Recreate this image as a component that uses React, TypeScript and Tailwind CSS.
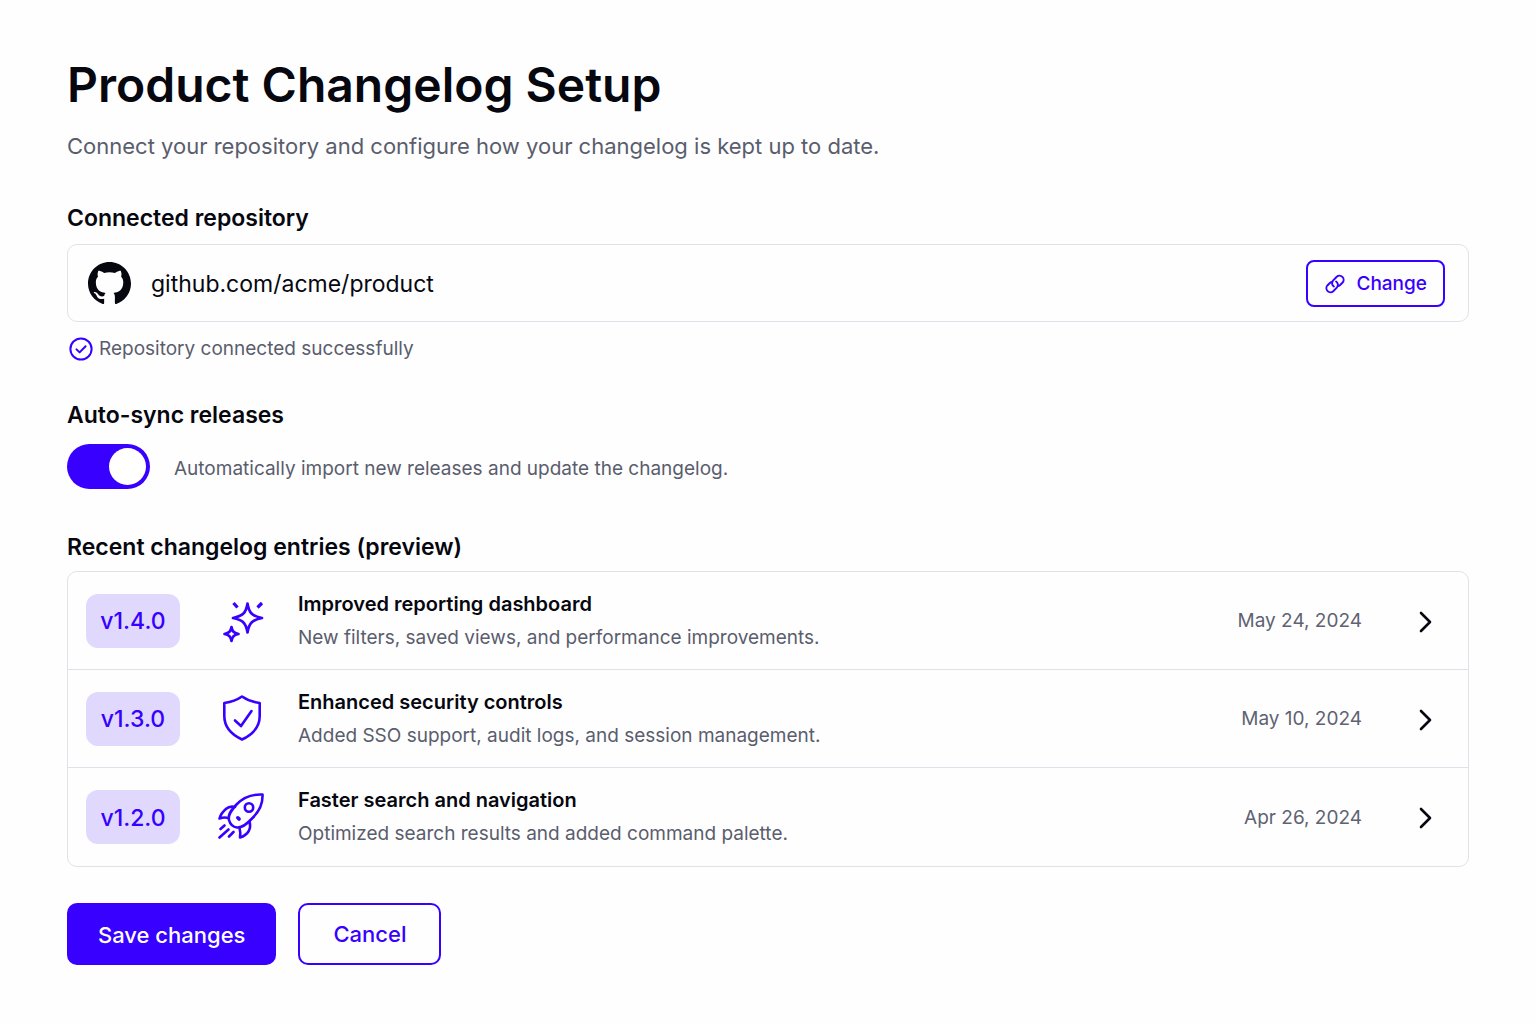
import { useState } from "react";
import type { ReactNode } from "react";

type Entry = {
  version: string;
  title: string;
  summary: string;
  date: string;
  icon: ReactNode;
};

function GithubMark() {
  return (
    <svg viewBox="0 0 16 16" className="size-[43px] shrink-0" fill="currentColor" aria-hidden="true">
      <path d="M8 0C3.58 0 0 3.58 0 8c0 3.54 2.29 6.53 5.47 7.59.4.07.55-.17.55-.38 0-.19-.01-.82-.01-1.49-2.01.37-2.53-.49-2.69-.94-.09-.23-.48-.94-.82-1.13-.28-.15-.68-.52-.01-.53.63-.01 1.08.58 1.23.82.72 1.21 1.87.87 2.33.66.07-.52.28-.87.51-1.07-1.78-.2-3.64-.89-3.64-3.95 0-.87.31-1.59.82-2.15-.08-.2-.36-1.02.08-2.12 0 0 .67-.21 2.2.82.64-.18 1.32-.27 2-.27s1.36.09 2 .27c1.53-1.04 2.2-.82 2.2-.82.44 1.1.16 1.92.08 2.12.51.56.82 1.27.82 2.15 0 3.07-1.87 3.75-3.65 3.95.29.25.54.73.54 1.48 0 1.07-.01 1.93-.01 2.2 0 .21.15.46.55.38A8.01 8.01 0 0 0 16 8c0-4.42-3.58-8-8-8z" />
    </svg>
  );
}

function LinkIcon() {
  return (
    <svg viewBox="0 0 24 24" className="size-[22px] shrink-0" fill="none" stroke="currentColor" strokeWidth="2.1" strokeLinecap="round" strokeLinejoin="round" aria-hidden="true">
      <path d="M13.2 9.300a4.300 4.300 0 0 1 1 6.400l-4.100 4.200a4.500 4.500 0 0 1-6.400-6.300l2.700-2.700a4 4 0 0 1 2.700-1.100" />
      <path d="M10.800 14.700a4.300 4.300 0 0 1-1-6.400l4.100-4.200a4.500 4.500 0 0 1 6.400 6.300l-2.700 2.700a4 4 0 0 1-2.700 1.100" />
    </svg>
  );
}

function CheckCircle() {
  return (
    <svg viewBox="0 0 24 24" className="size-6 shrink-0 text-[#3700ff]" fill="none" stroke="currentColor" strokeWidth="2" strokeLinecap="round" strokeLinejoin="round" aria-hidden="true">
      <circle cx="12" cy="12" r="10.6" />
      <path d="m7.500 12.400 3.100 3 6-6.200" />
    </svg>
  );
}

function SparklesIcon() {
  return (
    <svg viewBox="0 0 48 48" className="size-12" fill="none" stroke="currentColor" strokeWidth="2.700" strokeLinecap="round" strokeLinejoin="round" aria-hidden="true">
      <path d="M29.500 6.500c1.500 9.500 4.500 12.500 14.500 14.500-10 2-13 5-14.500 14.500C28 26 25 23 15 21c10-2 13-5 14.500-14.500Z" />
      <path d="M13.500 30c.8 4.500 2.200 6 7 7-4.800 1-6.200 2.500-7 7-.8-4.500-2.200-6-7-7 4.800-1 6.200-2.500 7-7Z" />
      <path d="m15.500 6 4 4.500M44 6 39.500 10.500" strokeWidth="3.200" strokeLinecap="butt" />
    </svg>
  );
}

function ShieldIcon() {
  return (
    <svg viewBox="0 0 48 48" className="size-12" fill="none" stroke="currentColor" strokeWidth="2.600" strokeLinecap="round" strokeLinejoin="round" aria-hidden="true">
      <path d="M24 1.500C19 5 13 7 6.300 8V21c0 11 7 18.500 17.700 23.500C34.700 39.500 41.700 32 41.700 21V8C35 7 29 5 24 1.500Z" />
      <path d="m17 25.500 6 5.500L33.500 16" />
    </svg>
  );
}

function RocketIcon() {
  return (
    <svg viewBox="0 0 48 48" className="size-12" fill="none" stroke="currentColor" strokeWidth="2.600" strokeLinecap="round" strokeLinejoin="round" aria-hidden="true">
      <path d="M44.500 1.500C34 1 25 4.500 18.500 11.500 12 18.500 9.800 22.500 11 27c1.200 4.500 4 7 8 7.500 4.500.5 9-2.500 15-9C42 18 45 11 44.500 1.500Z" />
      <circle cx="31" cy="14.500" r="4.200" />
      <path d="M17 14c-3.500-.8-6.500-.3-8.800 1.800C4.500 19 2.500 21.500 1.500 25.500c3.500-1.300 6-1.300 9-.5" />
      <path d="M21.500 35c1 3.500 1 6 .5 9.500 4-1.200 7-3.500 8.800-6.500 1.500-2.800 1.700-5.500.9-9" />
      <path d="m19.800 24.800 1.300 1.300" strokeWidth="3.600" />
      <path d="m6.500 32.500-4 3.500M10.500 36.500 1.500 44.500M15.500 39 11 43.500" />
    </svg>
  );
}

function ChevronIcon() {
  return (
    <svg viewBox="0 0 24 24" className="size-6" fill="none" stroke="currentColor" strokeWidth="2.600" strokeLinecap="round" strokeLinejoin="round" aria-hidden="true">
      <path d="m7 4 9 9-9 9" />
    </svg>
  );
}

const entries: Entry[] = [
  {
    version: "v1.4.0",
    title: "Improved reporting dashboard",
    summary: "New filters, saved views, and performance improvements.",
    date: "May 24, 2024",
    icon: <SparklesIcon />,
  },
  {
    version: "v1.3.0",
    title: "Enhanced security controls",
    summary: "Added SSO support, audit logs, and session management.",
    date: "May 10, 2024",
    icon: <ShieldIcon />,
  },
  {
    version: "v1.2.0",
    title: "Faster search and navigation",
    summary: "Optimized search results and added command palette.",
    date: "Apr 26, 2024",
    icon: <RocketIcon />,
  },
];

function EntryRow({ entry }: { entry: Entry }) {
  return (
    <li className="flex min-h-[98px] items-center pr-7 pl-[18px]">
      <span className="flex h-[54px] w-[94px] shrink-0 items-center justify-center rounded-xl bg-[#e1d9fd] pt-0.5 text-[23px] font-medium text-[#3700ff]">
        {entry.version}
      </span>
      <span className="ml-[38px] shrink-0 text-[#3700ff]">{entry.icon}</span>
      <div className="ml-8 min-w-0 flex-1">
        <h3 className="text-xl leading-[34px] font-semibold">{entry.title}</h3>
        <p className="text-[19px] leading-[34px] text-[#5a5d6c]">{entry.summary}</p>
      </div>
      <time className="shrink-0 pt-0.5 text-[19px] text-[#5f6271]">{entry.date}</time>
      <button type="button" aria-label={`Open ${entry.version}`} className="ml-[50px] flex size-7 items-center justify-center">
        <ChevronIcon />
      </button>
    </li>
  );
}

export default function App() {
  const [autoSync, setAutoSync] = useState(true);

  return (
    <main className="min-h-screen bg-[#fefeff] px-[67px] pt-[54px] pb-[60px] font-['Inter',sans-serif] text-[#06070f]">
      <header>
        <h1 className="text-5xl leading-[62px] font-semibold">Product Changelog Setup</h1>
        <p className="mt-3 text-[22px] leading-9 text-[#5a5d6c]">
          Connect your repository and configure how your changelog is kept up to date.
        </p>
      </header>

      <section className="mt-9">
        <h2 className="text-[23px] leading-9 font-semibold">Connected repository</h2>
        <div className="mt-2 flex min-h-[78px] items-center rounded-[10px] border border-[#e1e1e9] pr-[23px] pl-5">
          <GithubMark />
          <span className="ml-5 flex-1 pt-0.5 text-[23px]">github.com/acme/product</span>
          <button type="button" className="flex h-[47px] items-center gap-2.5 rounded-lg border-2 border-[#3700ff] px-4 pt-0.5 text-[19px] font-medium text-[#3700ff]">
            <LinkIcon />
            Change
          </button>
        </div>
        <p className="mt-3 flex items-center gap-1.5 pl-0.5 text-[19px] leading-[30px] text-[#5a5d6c]">
          <CheckCircle />
          Repository connected successfully
        </p>
      </section>

      <section className="mt-[33px]">
        <h2 className="text-[23px] leading-9 font-semibold">Auto-sync releases</h2>
        <div className="mt-[11px] flex items-center gap-6">
          <input
            id="auto-sync"
            type="checkbox"
            role="switch"
            checked={autoSync}
            onChange={(event) => setAutoSync(event.target.checked)}
            className="flex h-[45px] w-[83px] shrink-0 cursor-pointer appearance-none items-center justify-start rounded-full bg-[#c9c9d6] px-1 before:size-[37px] before:rounded-full before:bg-white checked:justify-end checked:bg-[#3700ff]"
          />
          <label htmlFor="auto-sync" className="pt-1.5 text-[19px] text-[#5a5d6c]">
            Automatically import new releases and update the changelog.
          </label>
        </div>
      </section>

      <section className="mt-10">
        <h2 className="text-[23px] leading-9 font-semibold">Recent changelog entries (preview)</h2>
        <ul className="mt-1.5 divide-y divide-[#e1e1e9] rounded-[10px] border border-[#e1e1e9]">
          {entries.map((entry) => (
            <EntryRow key={entry.version} entry={entry} />
          ))}
        </ul>
      </section>

      <div className="mt-9 flex gap-[22px]">
        <button type="button" className="h-[62px] rounded-[10px] bg-[#3700ff] px-[31px] pt-0.5 text-[22px] font-medium text-white">
          Save changes
        </button>
        <button type="button" className="h-[62px] rounded-[10px] border-2 border-[#3700ff] px-[33px] text-[22px] font-medium text-[#3700ff]">
          Cancel
        </button>
      </div>
    </main>
  );
}
